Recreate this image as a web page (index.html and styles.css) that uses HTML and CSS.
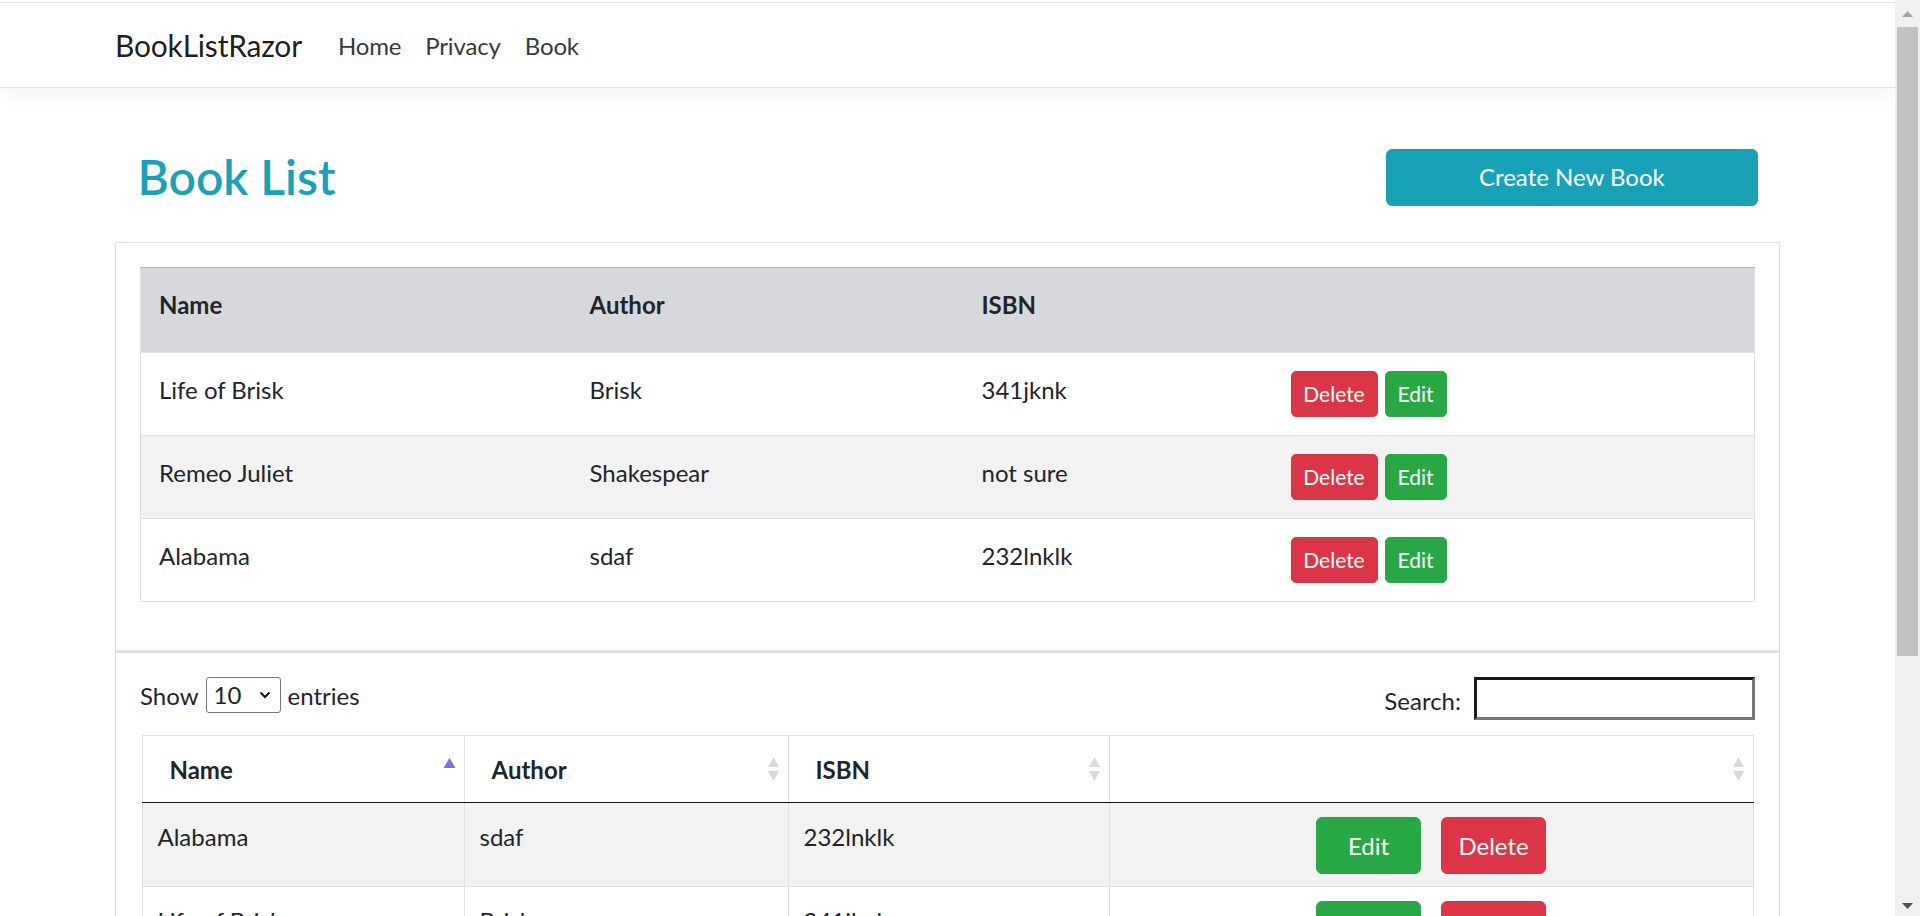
FILE: index.html
```html
<!DOCTYPE html>
<html lang="en">
<head>
<meta charset="utf-8">
<title>Book List - BookListRazor</title>
<link rel="stylesheet" href="styles.css">
</head>
<body>
<div class="window">
  <div class="page">
    <div class="topline"></div>
    <nav class="navbar">
      <div class="container nav-inner">
        <a class="brand" href="#">BookListRazor</a>
        <ul class="nav-links">
          <li><a href="#">Home</a></li>
          <li><a href="#">Privacy</a></li>
          <li><a href="#">Book</a></li>
        </ul>
      </div>
    </nav>

    <main class="container main">
      <div class="head-row">
        <div class="col-title"><h2>Book List</h2></div>
        <div class="col-action"><a class="btn-create" href="#">Create New Book</a></div>
      </div>

      <section class="panel panel-first">
        <table class="books">
          <colgroup>
            <col class="c1"><col class="c2"><col class="c3"><col>
          </colgroup>
          <tbody>
            <tr class="head">
              <th>Name</th><th>Author</th><th>ISBN</th><th></th>
            </tr>
            <tr>
              <td>Life of Brisk</td><td>Brisk</td><td>341jknk</td>
              <td><div class="acts"><a class="btn-sm danger w-del" href="#">Delete</a><a class="btn-sm success w-edit" href="#">Edit</a></div></td>
            </tr>
            <tr class="odd">
              <td>Remeo Juliet</td><td>Shakespear</td><td>not sure</td>
              <td><div class="acts"><a class="btn-sm danger w-del" href="#">Delete</a><a class="btn-sm success w-edit" href="#">Edit</a></div></td>
            </tr>
            <tr>
              <td>Alabama</td><td>sdaf</td><td>232lnklk</td>
              <td><div class="acts"><a class="btn-sm danger w-del" href="#">Delete</a><a class="btn-sm success w-edit" href="#">Edit</a></div></td>
            </tr>
          </tbody>
        </table>
      </section>

      <section class="panel panel-second">
        <div class="dt-top">
          <div class="dt-length">
            <span>Show</span>
            <div class="len-select"><span>10</span>
              <svg class="chev" width="12" height="8" viewBox="0 0 12 8"><path d="M1.5 1.5 L6 6 L10.5 1.5" fill="none" stroke="#111" stroke-width="2"/></svg>
            </div>
            <span>entries</span>
          </div>
          <div class="dt-filter">
            <span>Search:</span>
            <div class="search-input"></div>
          </div>
        </div>

        <table class="dt">
          <colgroup>
            <col class="d1"><col class="d2"><col class="d3"><col>
          </colgroup>
          <thead>
            <tr>
              <th><div class="th-in"><span>Name</span>
                <svg class="sort" width="13" height="24" viewBox="0 0 13 24"><polygon points="6.5,1 0.5,11 12.5,11" fill="#7676d4"/></svg></div></th>
              <th><div class="th-in"><span>Author</span>
                <svg class="sort" width="13" height="24" viewBox="0 0 13 24"><polygon points="6.5,0 1,10 12,10" fill="#d9d9d9"/><polygon points="1,14 12,14 6.5,24" fill="#d9d9d9"/></svg></div></th>
              <th><div class="th-in"><span>ISBN</span>
                <svg class="sort" width="13" height="24" viewBox="0 0 13 24"><polygon points="6.5,0 1,10 12,10" fill="#d9d9d9"/><polygon points="1,14 12,14 6.5,24" fill="#d9d9d9"/></svg></div></th>
              <th><div class="th-in"><span></span>
                <svg class="sort" width="13" height="24" viewBox="0 0 13 24"><polygon points="6.5,0 1,10 12,10" fill="#d9d9d9"/><polygon points="1,14 12,14 6.5,24" fill="#d9d9d9"/></svg></div></th>
            </tr>
          </thead>
          <tbody>
            <tr class="odd">
              <td>Alabama</td><td>sdaf</td><td>232lnklk</td>
              <td><div class="acts2"><a class="btn success" href="#">Edit</a><a class="btn danger" href="#">Delete</a></div></td>
            </tr>
            <tr>
              <td>Life of Brisk</td><td>Brisk</td><td>341jknk</td>
              <td><div class="acts2"><a class="btn success" href="#">Edit</a><a class="btn danger" href="#">Delete</a></div></td>
            </tr>
            <tr class="odd">
              <td>Remeo Juliet</td><td>Shakespear</td><td>not sure</td>
              <td><div class="acts2"><a class="btn success" href="#">Edit</a><a class="btn danger" href="#">Delete</a></div></td>
            </tr>
          </tbody>
        </table>
      </section>
    </main>
  </div>

  <div class="scrollbar">
    <div class="sb-btn sb-up">
      <svg width="11" height="6" viewBox="0 0 11 6"><polygon points="5.5,0 0,6 11,6" fill="#a3a3a3"/></svg>
    </div>
    <div class="sb-track"><div class="sb-thumb"></div></div>
    <div class="sb-btn sb-down">
      <svg width="11" height="6" viewBox="0 0 11 6"><polygon points="0,0 11,0 5.5,6" fill="#505050"/></svg>
    </div>
  </div>
</div>
</body>
</html>
```

FILE: styles.css
```css
* { box-sizing: border-box; }

html, body {
  margin: 0;
  height: 100%;
}

body {
  font-family: Lato, "Noto Sans", sans-serif;
  font-size: 24px;
  line-height: 36px;
  color: #212529;
  background: #fff;
  overflow: hidden;
}

a { text-decoration: none; }

.window {
  display: flex;
  height: 916px;
  overflow: hidden;
}

.page {
  flex: 1;
  min-width: 0;
  overflow: hidden;
  padding-top: 2px;
}

.topline {
  height: 1px;
  background: #e3e3e3;
}

.container {
  width: 1665px;
  margin: 0 auto;
}

/* Navbar */
.navbar {
  background: #fff;
  border-bottom: 1px solid #e3e3e3;
  box-shadow: 0 6px 18px rgba(0, 0, 0, .05);
  padding: 12px 0;
}

.nav-inner {
  display: flex;
  align-items: center;
}

.brand {
  font-size: 30px;
  line-height: 45px;
  padding: 8px 0 7px;
  margin-right: 24px;
  letter-spacing: -0.2px;
  color: rgba(0, 0, 0, .9);
}

.nav-links {
  display: flex;
  list-style: none;
  margin: 0;
  padding: 0;
}

.nav-links a {
  display: block;
  padding: 13px 12px 11px;
  letter-spacing: -0.15px;
  color: #343a40;
}

/* Main */
.main {
  padding-top: 60px;
}

.head-row {
  display: flex;
}

.col-title {
  flex: 0 0 50%;
  padding: 0 22.5px;
}

.col-title h2 {
  margin: 0 0 12px;
  font-size: 48px;
  line-height: 57.6px;
  font-weight: 600;
  color: #17a2b8;
}

.col-action {
  flex: 0 0 25%;
  margin-left: 25%;
  padding: 1px 22.5px 0;
}

.btn-create {
  display: block;
  height: 57px;
  padding: 9px 18px;
  background: #17a2b8;
  border: 1px solid #17a2b8;
  border-radius: 6px;
  color: #fff;
  text-align: center;
}

.panel {
  border: 1px solid #dee2e6;
  padding: 24px;
}

.panel-first {
  margin-top: 24px;
}

.panel-second {
  border-top-width: 2px;
}

/* First table */
.books {
  width: 100%;
  border-collapse: collapse;
  border: 1px solid #dee2e6;
  margin-bottom: 24px;
  table-layout: fixed;
}

.books .c1 { width: 431px; }
.books .c2 { width: 392px; }
.books .c3 { width: 309px; }

.books th {
  background: #d6d8db;
  border-top: 1px solid #b3b7bb;
  padding: 19px 18px 29px;
  text-align: left;
  font-weight: 700;
  vertical-align: top;
}

.books td {
  border-top: 1px solid #dee2e6;
  padding: 18px;
  vertical-align: top;
}

.books td:not(:last-child) {
  padding-top: 19px;
  padding-bottom: 17px;
}

.books tr.odd td { background: #f2f2f2; }

.acts {
  display: flex;
  gap: 7px;
}

.btn-sm {
  display: block;
  height: 46px;
  padding: 6px 0;
  font-size: 21px;
  line-height: 32px;
  border-radius: 5px;
  color: #fff;
  text-align: center;
}

.w-del { width: 87px; }
.w-edit { width: 62px; }

.danger { background: #dc3545; border: 1px solid #dc3545; }
.success { background: #28a745; border: 1px solid #28a745; }

/* DataTable */
.dt-top {
  display: flex;
  justify-content: space-between;
  align-items: flex-start;
  margin-bottom: 15px;
}

.dt-length {
  display: flex;
  align-items: center;
  gap: 7px;
  height: 37px;
}

.dt-length > span { padding-top: 2px; }

.len-select {
  width: 75px;
  height: 36px;
  border: 1px solid #767676;
  border-radius: 3px;
  display: flex;
  align-items: center;
  justify-content: space-between;
  padding: 0 9px 0 7px;
  background: #fff;
}

.chev { display: block; }

.dt-filter {
  display: flex;
  align-items: center;
  gap: 13px;
}

.dt-filter span { padding-top: 5px; }

.search-input {
  width: 281px;
  height: 43px;
  border: 3px solid;
  border-color: #1b1b1b #767676 #767676 #1b1b1b;
  background: #fff;
}

.dt {
  width: 1612px;
  margin: 0 auto;
  border-collapse: collapse;
  border: 1px solid #dee2e6;
  table-layout: fixed;
}

.dt .d1 { width: 322px; }
.dt .d2 { width: 324px; }
.dt .d3 { width: 321px; }

.dt th {
  border: 1px solid #dee2e6;
  border-bottom: 1px solid #111;
  padding: 16px 8px 14px 27px;
  text-align: left;
  font-weight: 700;
}

.th-in {
  display: flex;
  justify-content: space-between;
  align-items: center;
}

.sort { display: block; flex: none; margin-top: -2px; }

.dt td {
  border: 1px solid #dee2e6;
  padding: 16px 15px 10px;
  vertical-align: top;
}

.dt td:last-child {
  padding: 14px 15px 12px;
}

.dt tr.odd td { background: #f2f2f2; }

.acts2 {
  display: flex;
  justify-content: center;
  gap: 20px;
}

.btn {
  display: block;
  width: 105px;
  height: 57px;
  padding: 10px 0 8px;
  border-radius: 6px;
  color: #fff;
  text-align: center;
}

/* Scrollbar */
.scrollbar {
  flex: 0 0 25px;
  display: flex;
  flex-direction: column;
  background: #f0f0f0;
}

.sb-btn {
  display: flex;
  align-items: center;
  justify-content: center;
}

.sb-btn svg { display: block; }

.sb-up { height: 27px; }
.sb-down { height: 20px; }

.sb-track {
  flex: 1;
  padding: 0 2px;
}

.sb-thumb {
  height: 629px;
  background: #c1c1c1;
}
```
